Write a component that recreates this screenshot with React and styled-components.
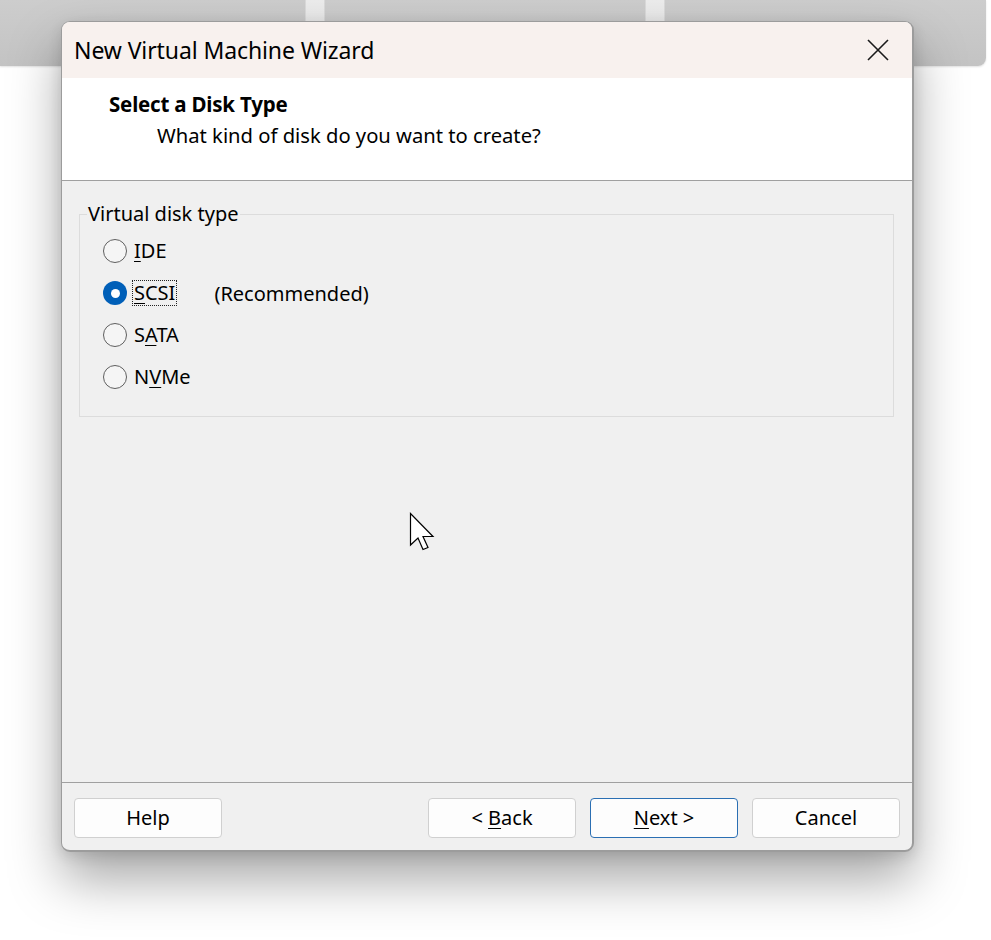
import React from 'react';
import styled, { createGlobalStyle } from 'styled-components';

const GlobalStyle = createGlobalStyle`
  html, body {
    margin: 0;
    padding: 0;
    background: #ffffff;
  }
  * {
    box-sizing: border-box;
  }
`;

const Page = styled.div`
  position: relative;
  width: 991px;
  height: 940px;
  overflow: hidden;
  background: #ffffff;
  font-family: 'Noto Sans', 'Open Sans', sans-serif;
  color: #000;
`;

const BackWindow = styled.div`
  display: flex;
  width: 986px;
  height: 66px;
  border-bottom-right-radius: 8px;
  overflow: hidden;
  box-shadow: 0 1px 2px rgba(0, 0, 0, 0.12);
`;

const BackPanel = styled.div`
  flex: ${(p) => p.$grow || 1};
  background: linear-gradient(to bottom, #cdcdcd, #c3c3c3);
`;

const BackGap = styled.div`
  width: 20px;
  background: linear-gradient(to bottom, #ececec, #e2e2e2);
  border-left: 1px solid #dadada;
  border-right: 1px solid #dadada;
`;

const Dialog = styled.div`
  position: absolute;
  left: 61px;
  top: 21px;
  width: 853px;
  height: 831px;
  display: flex;
  flex-direction: column;
  border: 1px solid #9c9c9c;
  border-right-width: 2px;
  border-bottom-width: 2px;
  border-radius: 9px;
  overflow: hidden;
  background: #f0f0f0;
  box-shadow:
    0 28px 52px rgba(0, 0, 0, 0.34),
    0 4px 14px rgba(0, 0, 0, 0.12);
`;

const TitleBar = styled.div`
  height: 56px;
  flex-shrink: 0;
  display: flex;
  align-items: center;
  justify-content: space-between;
  padding: 0 22px 0 12px;
  background: #f8f1ee;
`;

const Title = styled.div`
  font-size: 23px;
  letter-spacing: -0.1px;
`;

const CloseButton = styled.div`
  width: 24px;
  height: 24px;
  display: flex;
  align-items: center;
  justify-content: center;
`;

const Header = styled.div`
  height: 103px;
  flex-shrink: 0;
  background: #ffffff;
  border-bottom: 1px solid #a0a0a0;
  padding: 12px 0 0 47px;
`;

const HeaderTitle = styled.div`
  font-size: 20.5px;
  font-weight: 700;
  line-height: 28px;
  letter-spacing: -0.2px;
`;

const HeaderSubtitle = styled.div`
  font-size: 20.2px;
  line-height: 28px;
  margin: 3px 0 0 48px;
`;

const Body = styled.div`
  flex: 1;
  padding: 22px 18px 0 17px;
  font-size: 20px;
`;

const GroupBox = styled.fieldset`
  margin: 0;
  height: 214px;
  padding: 5px 0 0 23px;
  border: 1px solid #dcdcdc;
  display: flex;
  flex-direction: column;
`;

const Legend = styled.legend`
  padding: 0 1px;
  margin-left: -16px;
  line-height: 22px;
`;

const RadioRow = styled.label`
  display: flex;
  align-items: center;
  height: 42px;
`;

const RadioCircle = styled.span`
  width: 24px;
  height: 24px;
  border-radius: 50%;
  flex-shrink: 0;
  margin-right: 7px;
  display: flex;
  align-items: center;
  justify-content: center;
  background: ${(p) => (p.$checked ? '#005fb8' : '#f5f5f5')};
  border: ${(p) => (p.$checked ? 'none' : '1px solid #5f5f5f')};

  &::after {
    content: '';
    display: ${(p) => (p.$checked ? 'block' : 'none')};
    width: 9px;
    height: 9px;
    border-radius: 50%;
    background: #ffffff;
  }
`;

const RadioText = styled.span`
  padding: 0 1px;
  margin-left: -2px;
  line-height: 24px;
  border: 1px dotted ${(p) => (p.$focused ? '#222' : 'transparent')};
`;

const Note = styled.span`
  margin-left: 37px;
`;

const Key = styled.span`
  text-decoration: underline;
  text-underline-offset: 3px;
  text-decoration-thickness: 1px;
`;

const Footer = styled.div`
  height: 68px;
  flex-shrink: 0;
  border-top: 1px solid #a0a0a0;
  display: flex;
  align-items: center;
  padding: 2px 12px 0 12px;
  gap: 14px;
`;

const Spacer = styled.div`
  flex: 1;
`;

const Button = styled.div`
  width: 148px;
  height: 40px;
  display: flex;
  align-items: center;
  justify-content: center;
  white-space: pre;
  background: #fdfdfd;
  border: 1px solid ${(p) => (p.$default ? '#2b6fb3' : '#d0d0d0')};
  border-radius: 4px;
  font-size: 20px;
`;

const Cursor = styled.svg`
  position: absolute;
  left: 409px;
  top: 512px;
`;

const radios = [
  { id: 'ide', label: <><Key>I</Key>DE</> },
  { id: 'scsi', label: <><Key>S</Key>CSI</>, checked: true, note: '(Recommended)' },
  { id: 'sata', label: <>S<Key>A</Key>TA</> },
  { id: 'nvme', label: <>N<Key>V</Key>Me</> },
];

const App = () => (
  <Page>
    <GlobalStyle />
    <BackWindow>
      <BackPanel $grow={305} />
      <BackGap />
      <BackPanel $grow={320} />
      <BackGap />
      <BackPanel $grow={321} />
    </BackWindow>

    <Dialog>
      <TitleBar>
        <Title>New Virtual Machine Wizard</Title>
        <CloseButton>
          <svg width="22" height="22" viewBox="0 0 22 22">
            <path d="M1 1 L21 21 M21 1 L1 21" stroke="#1a1a1a" strokeWidth="1.6" />
          </svg>
        </CloseButton>
      </TitleBar>

      <Header>
        <HeaderTitle>Select a Disk Type</HeaderTitle>
        <HeaderSubtitle>What kind of disk do you want to create?</HeaderSubtitle>
      </Header>

      <Body>
        <GroupBox>
          <Legend>Virtual disk type</Legend>
          {radios.map((r) => (
            <RadioRow key={r.id}>
              <RadioCircle $checked={r.checked} />
              <RadioText $focused={r.checked}>{r.label}</RadioText>
              {r.note && <Note>{r.note}</Note>}
            </RadioRow>
          ))}
        </GroupBox>
      </Body>

      <Footer>
        <Button>Help</Button>
        <Spacer />
        <Button>{'< '}<Key>B</Key>ack</Button>
        <Button $default><Key>N</Key>{'ext >'}</Button>
        <Button>Cancel</Button>
      </Footer>
    </Dialog>

    <Cursor width="26" height="40" viewBox="0 0 26 40">
      <path
        d="M1.5 1.5 L1.5 33 L9 26 L14 37.5 L19 35.5 L14 24.5 L24 24.5 Z"
        fill="#ffffff"
        stroke="#000000"
        strokeWidth="1.2"
        strokeLinejoin="miter"
      />
    </Cursor>
  </Page>
);

export default App;
